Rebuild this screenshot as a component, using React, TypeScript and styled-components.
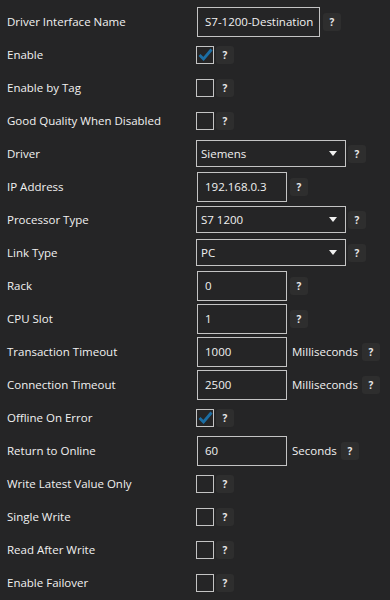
import React from "react";
import styled, { createGlobalStyle } from "styled-components";

const GlobalStyle = createGlobalStyle`
  html, body {
    margin: 0;
    padding: 0;
    background: #252526;
  }
  body {
    font-family: "Segoe UI", "Open Sans", "Noto Sans", sans-serif;
  }
`;

type FieldKind =
  | { type: "text"; value: string; width: number }
  | { type: "check"; checked: boolean }
  | { type: "select"; value: string }
  | { type: "number"; value: string; unit?: string };

interface Field {
  label: string;
  control: FieldKind;
}

const fields: Field[] = [
  { label: "Driver Interface Name", control: { type: "text", value: "S7-1200-Destination", width: 123 } },
  { label: "Enable", control: { type: "check", checked: true } },
  { label: "Enable by Tag", control: { type: "check", checked: false } },
  { label: "Good Quality When Disabled", control: { type: "check", checked: false } },
  { label: "Driver", control: { type: "select", value: "Siemens" } },
  { label: "IP Address", control: { type: "number", value: "192.168.0.3" } },
  { label: "Processor Type", control: { type: "select", value: "S7 1200" } },
  { label: "Link Type", control: { type: "select", value: "PC" } },
  { label: "Rack", control: { type: "number", value: "0" } },
  { label: "CPU Slot", control: { type: "number", value: "1" } },
  { label: "Transaction Timeout", control: { type: "number", value: "1000", unit: "Milliseconds" } },
  { label: "Connection Timeout", control: { type: "number", value: "2500", unit: "Milliseconds" } },
  { label: "Offline On Error", control: { type: "check", checked: true } },
  { label: "Return to Online", control: { type: "number", value: "60", unit: "Seconds" } },
  { label: "Write Latest Value Only", control: { type: "check", checked: false } },
  { label: "Single Write", control: { type: "check", checked: false } },
  { label: "Read After Write", control: { type: "check", checked: false } },
  { label: "Enable Failover", control: { type: "check", checked: false } },
];

const CheckIcon = () => (
  <svg width="15" height="13" viewBox="0 0 15 13">
    <path d="M1.5 7 L5.5 11 L13.5 1.5" fill="none" stroke="#1c6ea4" strokeWidth="2.8" />
  </svg>
);

const Caret = () => (
  <svg width="8" height="5" viewBox="0 0 8 5">
    <path d="M0 0 H8 L4 5 Z" fill="#f0f0f0" />
  </svg>
);

const renderControl = (c: FieldKind) => {
  switch (c.type) {
    case "text":
      return (
        <>
          <TextBox $width={c.width}>{c.value}</TextBox>
          <HelpButton $gap={3}>?</HelpButton>
        </>
      );
    case "check":
      return (
        <>
          <CheckBox>{c.checked && <CheckIcon />}</CheckBox>
          <HelpButton $gap={2}>?</HelpButton>
        </>
      );
    case "select":
      return (
        <>
          <SelectBox>
            <span>{c.value}</span>
            <Caret />
          </SelectBox>
          <HelpButton $gap={2}>?</HelpButton>
        </>
      );
    case "number":
      return (
        <>
          <TextBox $width={90}>{c.value}</TextBox>
          {c.unit && <Unit>{c.unit}</Unit>}
          <HelpButton $gap={c.unit ? 4 : 3}>?</HelpButton>
        </>
      );
  }
};

const App: React.FC = () => {
  return (
    <>
      <GlobalStyle />
      <Panel>
        {fields.map((f) => (
          <Row key={f.label}>
            <Label>{f.label}</Label>
            <Controls>{renderControl(f.control)}</Controls>
          </Row>
        ))}
      </Panel>
    </>
  );
};

export default App;

const Panel = styled.div`
  width: 390px;
  height: 600px;
  box-sizing: border-box;
  padding-top: 5px;
  background: #252526;
  overflow: hidden;
`;

const Row = styled.div`
  display: grid;
  grid-template-columns: 189px 1fr;
  align-items: center;
  height: 33px;
  padding-left: 7px;
`;

const Label = styled.div`
  color: #f1f1f1;
  font-size: 11.5px;
  white-space: nowrap;
`;

const Controls = styled.div`
  display: flex;
  align-items: center;
`;

const TextBox = styled.div<{ $width: number }>`
  width: ${(p) => p.$width}px;
  height: 30px;
  box-sizing: border-box;
  margin-left: 1px;
  border: 1px solid #c4c4c4;
  padding: 0 7px;
  display: flex;
  align-items: center;
  color: #f1f1f1;
  font-size: 11.5px;
  white-space: nowrap;
  overflow: hidden;
`;

const SelectBox = styled.div`
  width: 150px;
  height: 27px;
  box-sizing: border-box;
  border: 1px solid #c4c4c4;
  padding: 0 8px 0 4px;
  display: flex;
  align-items: center;
  justify-content: space-between;
  color: #f1f1f1;
  font-size: 11.5px;
`;

const CheckBox = styled.div`
  width: 18px;
  height: 18px;
  box-sizing: border-box;
  border: 1px solid #c4c4c4;
  display: flex;
  align-items: center;
  justify-content: center;
`;

const Unit = styled.span`
  margin-left: 5px;
  color: #f1f1f1;
  font-size: 11.5px;
`;

const HelpButton = styled.div<{ $gap: number }>`
  margin-left: ${(p) => p.$gap}px;
  width: 18px;
  height: 18px;
  border-radius: 3px;
  background: #2e2e2e;
  color: #e8e8e8;
  font-size: 10px;
  font-weight: 700;
  display: flex;
  align-items: center;
  justify-content: center;
`;
